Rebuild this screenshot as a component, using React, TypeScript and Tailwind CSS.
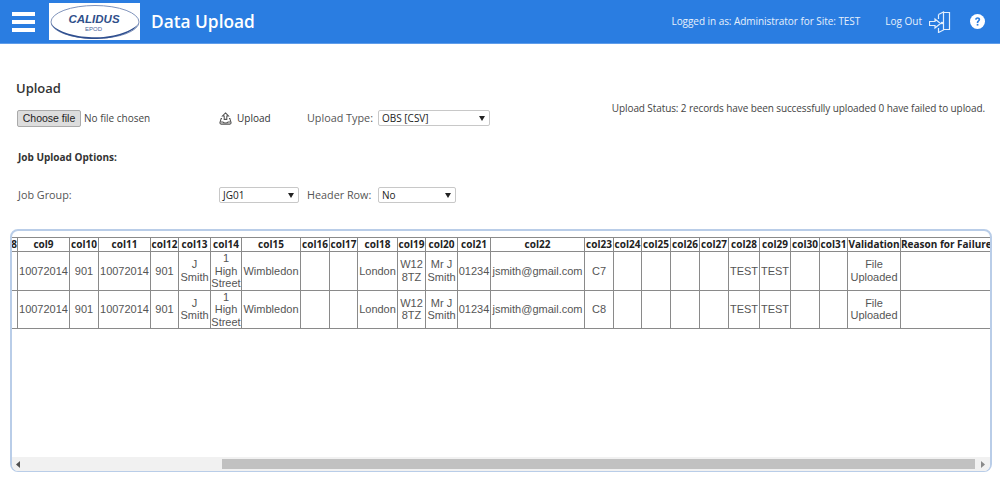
import React from 'react'

// ─── Data ─────────────────────────────────────────────────────────────────────

const columns: { name: string; width: string }[] = [
  { name: 'col8', width: 'w-[25px] text-right' },
  { name: 'col9', width: 'w-[52px]' },
  { name: 'col10', width: 'w-[29px]' },
  { name: 'col11', width: 'w-[52px]' },
  { name: 'col12', width: 'w-[28px]' },
  { name: 'col13', width: 'w-[32px]' },
  { name: 'col14', width: 'w-[31px]' },
  { name: 'col15', width: 'w-[59px]' },
  { name: 'col16', width: 'w-[29px]' },
  { name: 'col17', width: 'w-[28px]' },
  { name: 'col18', width: 'w-[40px]' },
  { name: 'col19', width: 'w-[28px]' },
  { name: 'col20', width: 'w-[32px]' },
  { name: 'col21', width: 'w-[33px]' },
  { name: 'col22', width: 'w-[94px]' },
  { name: 'col23', width: 'w-[29px]' },
  { name: 'col24', width: 'w-[28px]' },
  { name: 'col25', width: 'w-[29px]' },
  { name: 'col26', width: 'w-[29px]' },
  { name: 'col27', width: 'w-[29px]' },
  { name: 'col28', width: 'w-[31px]' },
  { name: 'col29', width: 'w-[31px]' },
  { name: 'col30', width: 'w-[29px]' },
  { name: 'col31', width: 'w-[28px]' },
  { name: 'Validation', width: 'w-[53px]' },
  { name: 'Reason for Failure', width: 'w-[91px]' },
]

const makeRow = (code: string) => [
  '', '10072014', '901', '10072014', '901', 'J Smith', '1 High Street', 'Wimbledon', '', '',
  'London', 'W12 8TZ', 'Mr J Smith', '01234', 'jsmith@gmail.com', code, '', '', '', '',
  'TEST', 'TEST', '', '', 'File Uploaded', '',
]

const rows = [makeRow('C7'), makeRow('C8')]

// ─── Small parts ──────────────────────────────────────────────────────────────

function FakeSelect({ value, width }: { value: string; width: string }) {
  return (
    <div
      className={`${width} h-[16px] flex items-center justify-between pl-[3px] pr-[4px] bg-white border border-[#c8c8c8] rounded-[2px] text-[10px] text-[#222]`}
    >
      <span>{value}</span>
      <svg width="6" height="5" viewBox="0 0 6 5" aria-hidden="true">
        <path d="M0 0h6L3 5z" fill="#222" />
      </svg>
    </div>
  )
}

function CalidusLogo() {
  return (
    <div className="w-[91px] h-[37px] bg-white ml-[14px] shrink-0">
      <svg width="91" height="37" viewBox="0 0 91 37" aria-label="Calidus EPOD">
        <ellipse cx="46" cy="19" rx="44" ry="16.5" fill="none" stroke="#7f93bb" strokeWidth="1" />
        <path d="M2 20C6 31 30 36.5 48 36C66 35.5 85 30 90 20C84 28 66 34 48 34.3C30 34.6 8 30 2 20z" fill="#2f4f8f" />
        <text x="45" y="20" textAnchor="middle" fontFamily="'Liberation Sans', sans-serif" fontSize="11.5" fontWeight="700" fontStyle="italic" fill="#2f4f8a">
          CALIDUS
        </text>
        <text x="44.5" y="28" textAnchor="middle" fontFamily="'Liberation Sans', sans-serif" fontSize="6" fill="#4a669c">
          EPOD
        </text>
      </svg>
    </div>
  )
}

// ─── App ──────────────────────────────────────────────────────────────────────

export default function App() {
  return (
    <div className="w-[1000px] h-[477px] overflow-hidden bg-white font-['Open_Sans',sans-serif]">
      {/* Top bar */}
      <header className="h-[44px] bg-[#2a7de1] border-b border-[#5f9dea] flex items-center text-white">
        <div className="w-[23px] ml-[12px] flex flex-col gap-[4px] shrink-0">
          <span className="h-[4px] bg-white" />
          <span className="h-[4px] bg-white" />
          <span className="h-[4px] bg-white" />
        </div>
        <CalidusLogo />
        <h1 className="ml-[11px] text-[17.3px] leading-none font-semibold">Data Upload</h1>
        <span className="ml-auto text-[10px] tracking-[-0.05px] text-[#e6f0fc]">Logged in as: Administrator for Site: TEST</span>
        <span className="ml-[25px] text-[10px] text-[#e6f0fc]">Log Out</span>
        <svg className="ml-[7px]" width="22" height="22" viewBox="0 0 22 22" fill="none" stroke="#e4effc" strokeWidth="1.2" aria-hidden="true">
          <path d="M9.5 3.5L14.5 1V19L9.5 21.5V17" />
          <path d="M14.5 1.5H20.5V18.5H14.5" />
          <path d="M9.5 3.5V8" />
          <path d="M0.5 10.5H6V8L11.5 12.5L6 17V14.5H0.5z" />
          <circle cx="13" cy="12" r="0.6" fill="#e4effc" />
        </svg>
        <svg className="ml-[19px] mr-[15px]" width="15" height="15" viewBox="0 0 15 15" aria-hidden="true">
          <circle cx="7.5" cy="7.5" r="7.5" fill="#fff" />
          <path d="M5 5.6C5 4.2 6.1 3.2 7.6 3.2C9.1 3.2 10.2 4.1 10.2 5.4C10.2 7.2 8.3 7.2 8.3 9H6.7C6.7 6.6 8.5 6.6 8.5 5.5C8.5 5 8.1 4.7 7.6 4.7C7 4.7 6.7 5.1 6.6 5.7z" fill="#2a7de1" />
          <rect x="6.7" y="9.9" width="1.7" height="1.7" fill="#2a7de1" />
        </svg>
      </header>

      {/* Upload form */}
      <section className="pl-[16px] pt-[35px] text-[#555]">
        <h2 className="text-[13px] leading-[18px] font-semibold text-[#333]">Upload</h2>
        <div className="flex items-center h-[20px] mt-[11px]">
          <div className="w-[203px] flex items-center text-[10px]">
            <button className="ml-[1px] w-[64px] h-[17px] bg-[#ddd] border border-[#aaa] rounded-[2px] text-[10.5px] leading-none text-[#222] font-['Liberation_Sans',sans-serif]">
              Choose file
            </button>
            <span className="ml-[3px] text-[#444]">No file chosen</span>
          </div>
          <div className="w-[88px] flex items-center gap-[5px] text-[#333] text-[10px]">
            <svg width="13" height="13" viewBox="0 0 15 15" fill="none" stroke="#555" strokeWidth="1.2" aria-hidden="true">
              <path d="M7.5 1L11 4.5H9V8.5H6V4.5H4z" />
              <path d="M3.5 7.5H2.5L1 12.5C1 13.5 1.5 14 2.5 14H12.5C13.5 14 14 13.5 14 12.5L12.5 7.5H11.5" />
              <path d="M1.5 11.5H4.5C5 13 10 13 10.5 11.5H13.5" />
            </svg>
            <span>Upload</span>
          </div>
          <span className="w-[71px] text-[10.8px]">Upload Type:</span>
          <FakeSelect value="OBS [CSV]" width="w-[112px]" />
          <span className="ml-auto mr-[15px] -mt-[20px] text-[10px] tracking-[-0.1px] text-[#444]">
            Upload Status: 2 records have been successfully uploaded 0 have failed to upload.
          </span>
        </div>
        <h3 className="ml-[2px] mt-[20px] text-[10px] leading-[18px] font-bold text-[#333]">Job Upload Options:</h3>
        <div className="flex items-center h-[20px] mt-[19px]">
          <span className="w-[203px] pl-[2px] text-[10.8px]">Job Group:</span>
          <FakeSelect value="JG01" width="w-[80px]" />
          <span className="ml-[8px] w-[71px] text-[10.8px]">Header Row:</span>
          <FakeSelect value="No" width="w-[78px]" />
        </div>
      </section>

      {/* Results table */}
      <section className="mt-[24px] ml-[9.5px] w-[982.5px] h-[243px] flex flex-col overflow-hidden border-t-2 border-x-2 border-b border-[#b9cde8] rounded-[8px]">
        <div className="flex-1 overflow-hidden pt-[6px]">
          <table className="-ml-[19.5px] w-[999px] table-fixed border-collapse font-['Liberation_Sans',sans-serif]">
            <thead>
              <tr className="h-[14px]">
                {columns.map((c) => (
                  <th
                    key={c.name}
                    className={`${c.width} p-0 border border-[#8a8a8a] text-[10px] leading-[13px] font-bold text-[#222] whitespace-nowrap font-['Open_Sans',sans-serif]`}
                  >
                    {c.name}
                  </th>
                ))}
              </tr>
            </thead>
            <tbody>
              {rows.map((row) => (
                <tr key={row[15]} className="h-[37.5px]">
                  {row.map((cell, i) => (
                    <td
                      key={columns[i].name}
                      className="p-0 border border-[#8a8a8a] text-center text-[11px] leading-[12.5px] text-[#555]"
                    >
                      {cell}
                    </td>
                  ))}
                </tr>
              ))}
            </tbody>
          </table>
        </div>
        {/* Horizontal scrollbar */}
        <div className="h-[14px] shrink-0 bg-[#f1f1f1] flex items-center">
          <svg className="ml-[4px] shrink-0" width="4" height="7" viewBox="0 0 4 7" aria-hidden="true">
            <path d="M4 0V7L0 3.5z" fill="#505050" />
          </svg>
          <div className="ml-[202.5px] w-[753px] h-[10px] bg-[#c1c1c1] shrink-0" />
          <svg className="ml-[6px] shrink-0" width="4" height="7" viewBox="0 0 4 7" aria-hidden="true">
            <path d="M0 0V7L4 3.5z" fill="#8a8a8a" />
          </svg>
        </div>
      </section>
    </div>
  )
}
